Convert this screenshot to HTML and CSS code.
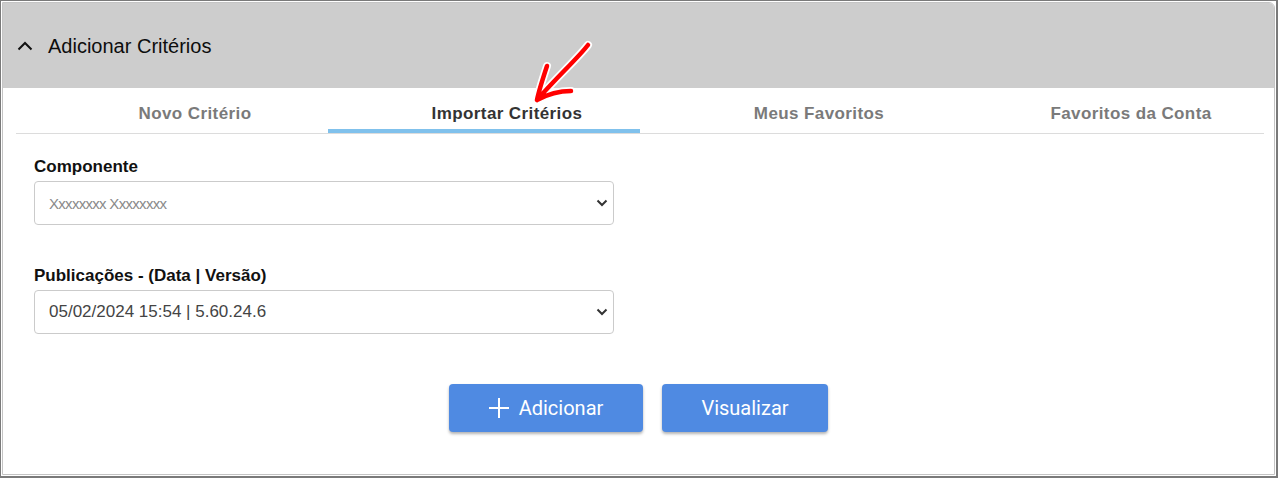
FILE: index.html
```html
<!DOCTYPE html>
<html>
<head>
  <title>Adicionar Critérios</title>
  <link rel="stylesheet" href="styles.css">
</head>
<body>

  <div class="frame">
    <div class="panel">

      <div class="panel-header">
        <svg class="chevron-up" width="16" height="10" viewBox="0 0 16 10">
          <path d="M1.5 8.5 L8 2 L14.5 8.5" fill="none" stroke="#111" stroke-width="2"/>
        </svg>
        <span class="panel-title">Adicionar Critérios</span>
      </div>

      <div class="tabs">
        <div class="tab">Novo Critério</div>
        <div class="tab active">Importar Critérios</div>
        <div class="tab">Meus Favoritos</div>
        <div class="tab">Favoritos da Conta</div>
      </div>

      <div class="content">
        <label class="field-label">Componente</label>
        <div class="select">
          <span class="placeholder">Xxxxxxxx Xxxxxxxx</span>
          <svg width="12" height="8" viewBox="0 0 12 8">
            <path d="M1.5 1.5 L6 6 L10.5 1.5" fill="none" stroke="#333" stroke-width="2"/>
          </svg>
        </div>

        <label class="field-label second">Publicações - (Data | Versão)</label>
        <div class="select">
          <span class="value">05/02/2024 15:54 | 5.60.24.6</span>
          <svg width="12" height="8" viewBox="0 0 12 8">
            <path d="M1.5 1.5 L6 6 L10.5 1.5" fill="none" stroke="#333" stroke-width="2"/>
          </svg>
        </div>

        <div class="actions">
          <button class="btn btn-add">
            <svg width="20" height="20" viewBox="0 0 20 20">
              <path d="M10 0 V20 M0 10 H20" stroke="#fff" stroke-width="2"/>
            </svg>
            Adicionar
          </button>
          <button class="btn btn-view">Visualizar</button>
        </div>
      </div>

    </div>
  </div>

  <!-- annotation arrow drawn over the screenshot -->
  <svg class="annotation" width="80" height="80" viewBox="0 0 80 80">
    <g fill="none" stroke-linecap="round" stroke-linejoin="round">
      <path d="M62 7 C52 20 30 40 11 62 M21 28 C17 40 13 52 11 62 C22 56 33 53 45 53" stroke="#fff" stroke-width="8"/>
      <path d="M62 7 C52 20 30 40 11 62 M21 28 C17 40 13 52 11 62 C22 56 33 53 45 53" stroke="#f00" stroke-width="4.5"/>
    </g>
  </svg>

</body>
</html>
```

FILE: styles.css
```css
body {
  margin: 0;
  width: 1278px;
  height: 478px;
  position: relative;
  font-family: "Liberation Sans", Arial, sans-serif;
  background: #fff;
}
.frame {
  box-sizing: border-box;
  height: 478px;
  border: 1px solid #7a7a7a;
  border-right-width: 2px;
  border-bottom-width: 2px;
  padding: 1px;
}
.panel {
  box-sizing: border-box;
  height: 100%;
  border: 1px solid #c4c4c4;
  border-radius: 0 6px 0 0;
  overflow: hidden;
}
.panel-header {
  height: 85px;
  background: #cdcdcd;
  display: flex;
  align-items: center;
  padding-left: 14px;
}
.chevron-up {
  margin-right: 15px;
  margin-top: 1px;
}
.panel-title {
  font-size: 20px;
  color: #0d0d0d;
  margin-top: 2px;
}
.tabs {
  display: flex;
  margin: 0 10px 0 13px;
  border-bottom: 1px solid #dcdcdc;
}
.tab {
  flex: 1;
  box-sizing: border-box;
  height: 45px;
  padding: 16px 0 0 46px;
  text-align: center;
  font-size: 17px;
  font-weight: bold;
  letter-spacing: 0.4px;
  color: #7a7a7a;
  border-bottom: 4px solid transparent;
}
.tab.active {
  color: #333;
  border-bottom-color: #80c1ec;
}
.content {
  padding: 22px 0 0 31px;
}
.field-label {
  display: block;
  font-size: 17px;
  font-weight: bold;
  line-height: 22px;
  color: #111;
  margin-bottom: 3px;
}
.field-label.second {
  margin-top: 40px;
}
.select {
  box-sizing: border-box;
  width: 580px;
  height: 44px;
  border: 1px solid #cbcbcb;
  border-radius: 4px;
  display: flex;
  align-items: center;
  justify-content: space-between;
  padding: 0 5px 0 14px;
}
.placeholder {
  font-size: 15px;
  letter-spacing: -0.7px;
  color: #8a8a8a;
}
.value {
  font-size: 17px;
  color: #444;
}
.actions {
  display: flex;
  justify-content: center;
  gap: 19px;
  margin: 50px 0 0 -31px;
}
.btn {
  height: 48px;
  border: none;
  border-radius: 4px;
  background: #4f8ae2;
  color: #fff;
  font-family: Roboto, sans-serif;
  font-size: 20px;
  box-shadow: 0 2px 3px rgba(0, 0, 0, 0.3);
  display: flex;
  align-items: center;
  justify-content: center;
}
.btn-add {
  width: 194px;
  gap: 10px;
}
.btn-view {
  width: 166px;
}
.annotation {
  position: absolute;
  left: 526px;
  top: 38px;
}
```
